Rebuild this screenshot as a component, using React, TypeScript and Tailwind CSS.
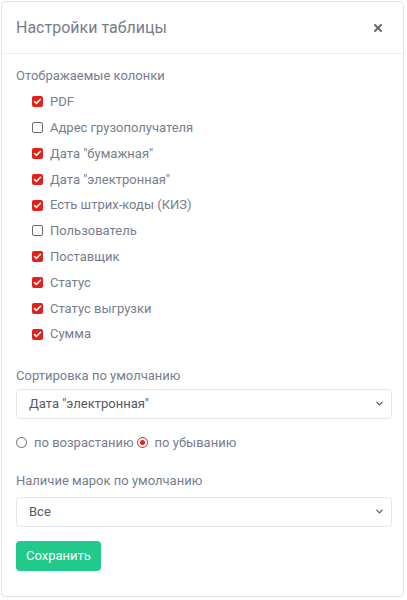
import { X, ChevronDown, Check } from "lucide-react";

const columns = [
  { label: "PDF", checked: true },
  { label: "Адрес грузополучателя", checked: false },
  { label: 'Дата "бумажная"', checked: true },
  { label: 'Дата "электронная"', checked: true },
  { label: "Есть штрих-коды (КИЗ)", checked: true },
  { label: "Пользователь", checked: false },
  { label: "Поставщик", checked: true },
  { label: "Статус", checked: true },
  { label: "Статус выгрузки", checked: true },
  { label: "Сумма", checked: true },
];

const Box = ({ checked }: { checked: boolean }) =>
  checked ? (
    <span className="w-[11px] h-[11px] rounded-[2px] bg-[#e3201b] flex items-center justify-center">
      <Check className="w-[9px] h-[9px] text-white" strokeWidth={4} />
    </span>
  ) : (
    <span className="w-[11px] h-[11px] rounded-[2px] border border-[#6b6b6b] bg-white" />
  );

const Select = ({ value }: { value: string }) => (
  <div className="h-[30px] rounded-[4px] border border-[#e3e5ec] flex items-center justify-between pl-[12px] pr-[6px] text-[13px] text-[#555a66]">
    <span>{value}</span>
    <ChevronDown className="w-[11px] h-[11px] text-[#555]" strokeWidth={2.5} />
  </div>
);

export default function App() {
  return (
    <div className="pt-px pl-px font-['Roboto',sans-serif] text-[#767d8d]">
      <div className="w-[403px] h-[596px] bg-white border border-[#e2e3e8] rounded-[4px]">
        <div className="h-[52px] px-[14px] flex items-center justify-between border-b border-[#eceef2]">
          <span className="text-[16px] text-[#767c8b]">Настройки таблицы</span>
          <X className="w-[12px] h-[12px] text-[#6a6a6a] mr-[5px]" strokeWidth={4} />
        </div>
        <div className="px-[14px] pt-[12px]">
          <div className="text-[13px] leading-[20px]">Отображаемые колонки</div>
          <div className="mt-[3px] pl-[16px] flex flex-col">
            {columns.map((c) => (
              <div key={c.label} className="h-[25.8px] flex items-center gap-[7px] text-[13px]">
                <Box checked={c.checked} />
                <span>{c.label}</span>
              </div>
            ))}
          </div>
          <div className="mt-[19px] text-[13px] leading-[20px]">Сортировка по умолчанию</div>
          <div className="mt-[3px] w-[376px]">
            <Select value={'Дата "электронная"'} />
          </div>
          <div className="mt-[13px] h-[22px] flex items-center text-[13px]">
            <span className="w-[11px] h-[11px] rounded-full border border-[#6b6b6b]" />
            <span className="ml-[7px]">по возрастанию</span>
            <span className="ml-[3px] w-[11px] h-[11px] rounded-full border-[1.5px] border-[#e3201b] flex items-center justify-center">
              <span className="w-[5px] h-[5px] rounded-full bg-[#e3201b]" />
            </span>
            <span className="ml-[7px]">по убыванию</span>
          </div>
          <div className="mt-[17px] text-[13px] leading-[20px]">Наличие марок по умолчанию</div>
          <div className="mt-[6px] w-[376px]">
            <Select value="Все" />
          </div>
          <button className="mt-[14px] h-[30px] px-[10px] rounded-[4px] bg-[#21c98b] text-white text-[13px]">
            Сохранить
          </button>
        </div>
      </div>
    </div>
  );
}
